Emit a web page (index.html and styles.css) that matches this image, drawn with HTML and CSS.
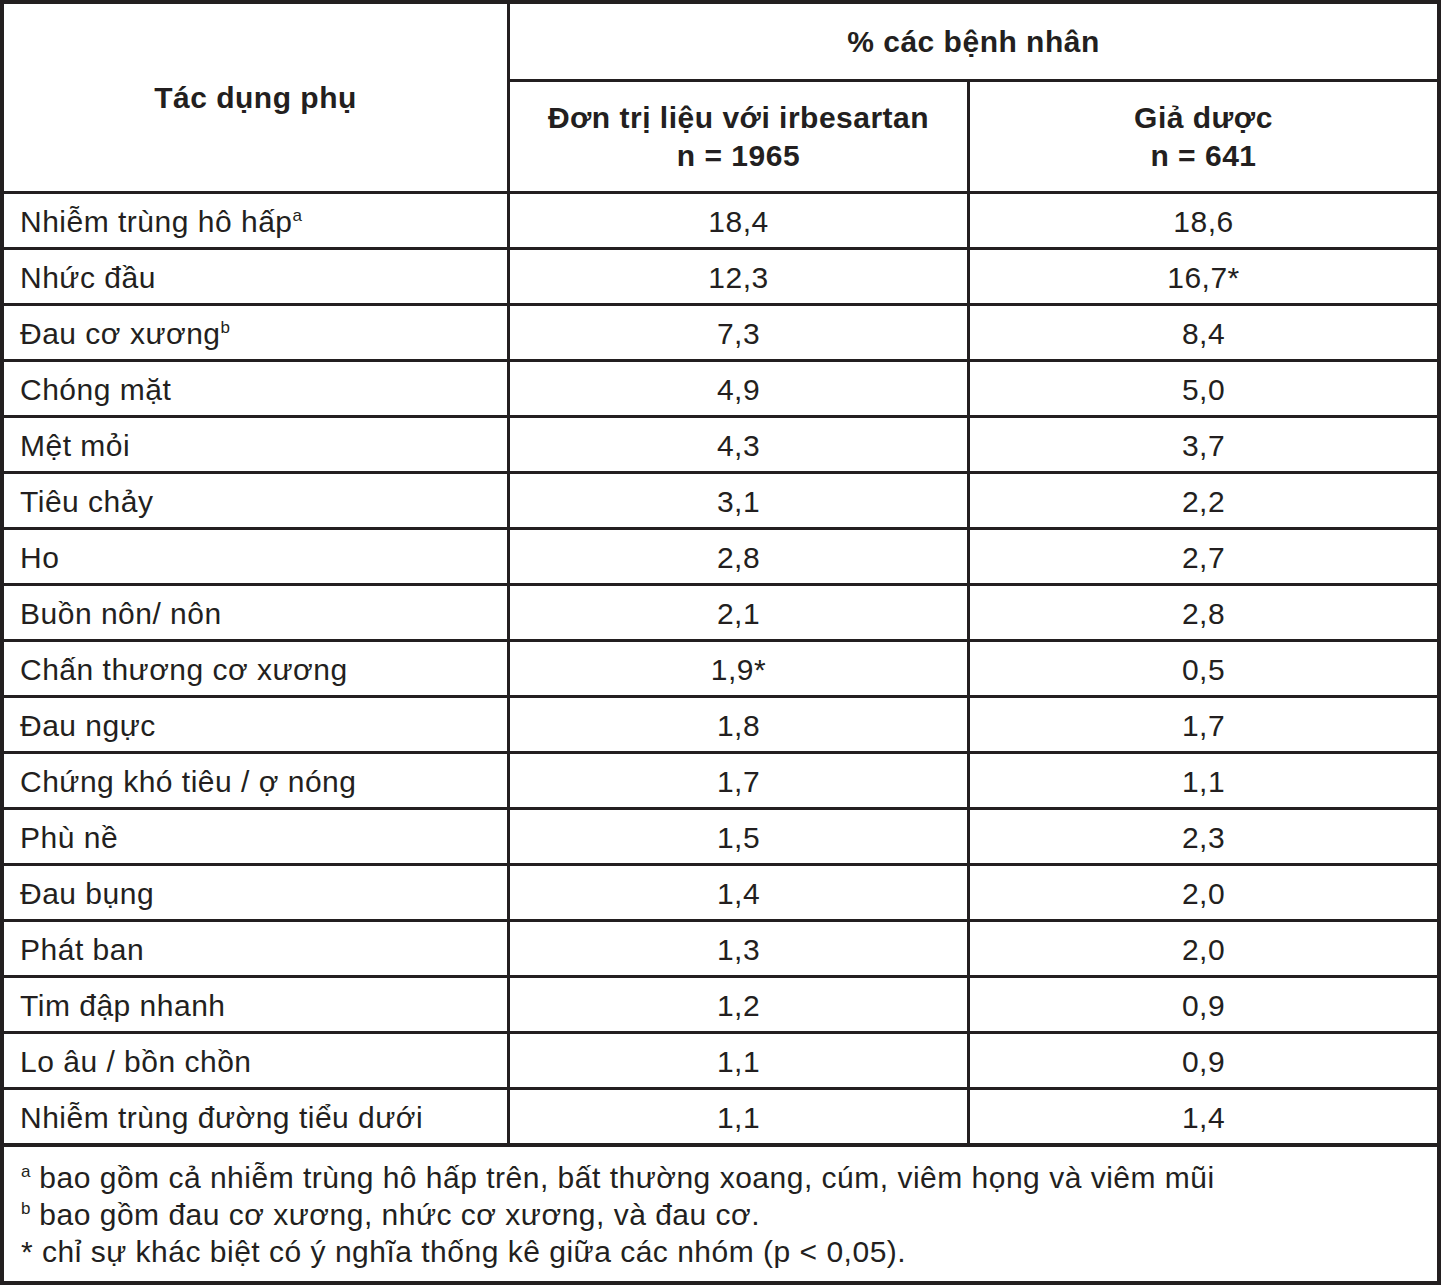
FILE: index.html
```html
<!DOCTYPE html>
<html lang="vi">
<head>
<meta charset="utf-8">
<title>Tác dụng phụ</title>
<link rel="stylesheet" href="styles.css">
</head>
<body>
<table class="tbl">
  <colgroup>
    <col class="c1">
    <col class="c2">
    <col class="c3">
  </colgroup>
  <thead>
    <tr class="h1">
      <th rowspan="2" class="hname">Tác dụng phụ</th>
      <th colspan="2" class="last">% các bệnh nhân</th>
    </tr>
    <tr class="h2">
      <th>Đơn trị liệu với irbesartan<br>n = 1965</th>
      <th class="last">Giả dược<br>n = 641</th>
    </tr>
  </thead>
  <tbody>
    <tr><td class="name">Nhiễm trùng hô hấp<sup>a</sup></td><td>18,4</td><td class="last">18,6</td></tr>
    <tr><td class="name">Nhức đầu</td><td>12,3</td><td class="last">16,7*</td></tr>
    <tr><td class="name">Đau cơ xương<sup>b</sup></td><td>7,3</td><td class="last">8,4</td></tr>
    <tr><td class="name">Chóng mặt</td><td>4,9</td><td class="last">5,0</td></tr>
    <tr><td class="name">Mệt mỏi</td><td>4,3</td><td class="last">3,7</td></tr>
    <tr><td class="name">Tiêu chảy</td><td>3,1</td><td class="last">2,2</td></tr>
    <tr><td class="name">Ho</td><td>2,8</td><td class="last">2,7</td></tr>
    <tr><td class="name">Buồn nôn/ nôn</td><td>2,1</td><td class="last">2,8</td></tr>
    <tr><td class="name">Chấn thương cơ xương</td><td>1,9*</td><td class="last">0,5</td></tr>
    <tr><td class="name">Đau ngực</td><td>1,8</td><td class="last">1,7</td></tr>
    <tr><td class="name">Chứng khó tiêu / ợ nóng</td><td>1,7</td><td class="last">1,1</td></tr>
    <tr><td class="name">Phù nề</td><td>1,5</td><td class="last">2,3</td></tr>
    <tr><td class="name">Đau bụng</td><td>1,4</td><td class="last">2,0</td></tr>
    <tr><td class="name">Phát ban</td><td>1,3</td><td class="last">2,0</td></tr>
    <tr><td class="name">Tim đập nhanh</td><td>1,2</td><td class="last">0,9</td></tr>
    <tr><td class="name">Lo âu / bồn chồn</td><td>1,1</td><td class="last">0,9</td></tr>
    <tr class="lastrow"><td class="name">Nhiễm trùng đường tiểu dưới</td><td>1,1</td><td class="last">1,4</td></tr>
  </tbody>
  <tfoot>
    <tr class="foot">
      <td colspan="3" class="last">
        <div class="note"><sup>a</sup> bao gồm cả nhiễm trùng hô hấp trên, bất thường xoang, cúm, viêm họng và viêm mũi</div>
        <div class="note"><sup>b</sup> bao gồm đau cơ xương, nhức cơ xương, và đau cơ.</div>
        <div class="note">* chỉ sự khác biệt có ý nghĩa thống kê giữa các nhóm (p &lt; 0,05).</div>
      </td>
    </tr>
  </tfoot>
</table>
</body>
</html>
```

FILE: styles.css
```css
html, body {
  margin: 0;
  padding: 0;
  background: #ffffff;
}
body {
  font-family: "Liberation Sans", Arial, sans-serif;
  color: #231f20;
}
.tbl {
  width: 1441px;
  box-sizing: border-box;
  border-collapse: separate;
  border-spacing: 0;
  table-layout: fixed;
  border: 4px solid #231f20;
  font-size: 30px;
  letter-spacing: 0.5px;
}
.c1 { width: 506px; }
.c2 { width: 460px; }
.c3 { width: 467px; }
.tbl th, .tbl td {
  border: 0 solid #231f20;
  border-right-width: 3px;
  border-bottom-width: 3px;
  padding: 0;
  text-align: center;
  vertical-align: middle;
}
.tbl th.last, .tbl td.last {
  border-right-width: 0;
}
.tbl th {
  font-weight: bold;
  line-height: 38px;
}
.h1 { height: 78px; }
.h2 { height: 112px; }
.tbl tbody tr { height: 56px; }
.tbl tbody td { padding-top: 2px; }
.tbl tbody tr.lastrow { height: 57px; }
.tbl tbody tr.lastrow td { border-bottom-width: 4px; }
.tbl td.name {
  text-align: left;
  padding-left: 16px;
}
sup {
  font-size: 17px;
  vertical-align: 11px;
  line-height: 0;
  letter-spacing: 0;
}
.foot { height: 134px; }
.tbl .foot td {
  border-bottom-width: 0;
  text-align: left;
  padding: 12px 0 0 17px;
  vertical-align: top;
}
.note {
  line-height: 37px;
}
```
